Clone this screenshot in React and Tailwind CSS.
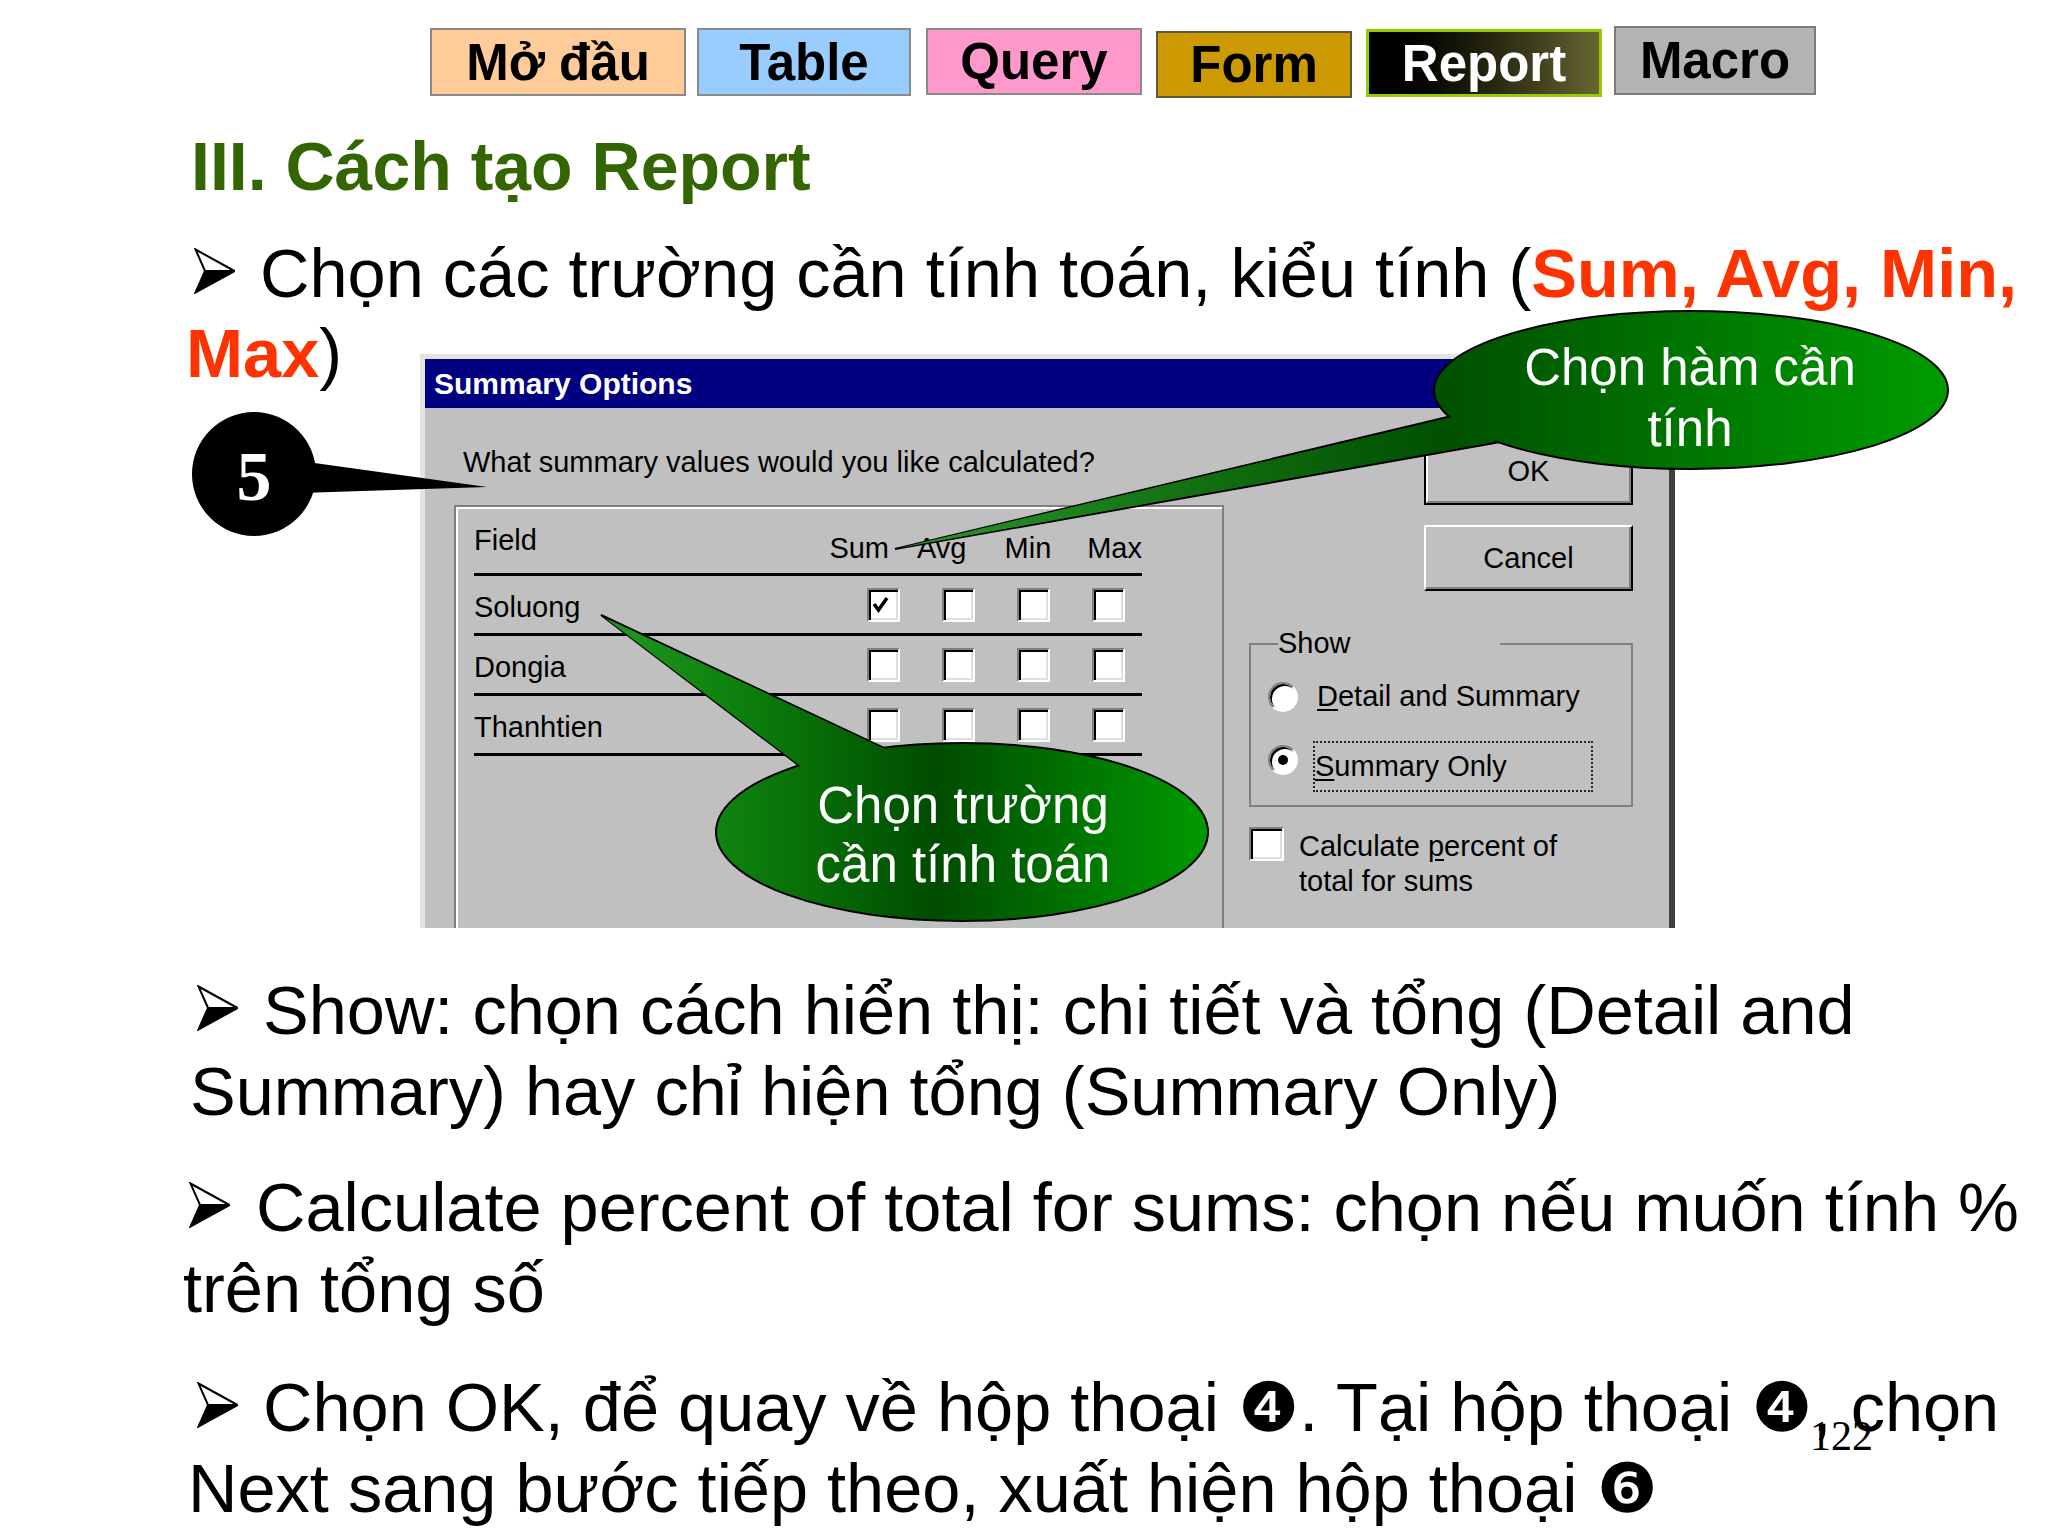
import React from 'react'

const Bullet = () => (
  <svg width="42" height="46" viewBox="0 0 42 46" className="inline-block align-[3px]">
    <path d="M1.5 1.5 L40.5 23 L11 23 Z" fill="#fff" stroke="#000" strokeWidth="2" strokeLinejoin="miter" />
    <path d="M11 23 L40.5 23 L1.5 44.5 Z" fill="#000" stroke="#000" strokeWidth="2" strokeLinejoin="miter" />
  </svg>
)

const tabs = [
  { label: 'Mở đầu', cls: 'ml-0 mt-[2px] w-[256px] h-[68px] bg-[#ffcc99] border-2 border-[#8a8a8a] text-black' },
  { label: 'Table', cls: 'ml-[11px] mt-[2px] w-[214px] h-[68px] bg-[#99ccff] border-2 border-[#8a8a8a] text-black' },
  { label: 'Query', cls: 'ml-[15px] mt-[2px] w-[216px] h-[67px] bg-[#ff99cc] border-2 border-[#8a8a8a] text-black' },
  { label: 'Form', cls: 'ml-[14px] mt-[5px] w-[196px] h-[67px] bg-[#cc9900] border-2 border-[#5a5a3a] text-black' },
  { label: 'Report', cls: 'ml-[14px] mt-[3px] w-[236px] h-[68px] bg-gradient-to-r from-black to-[#666633] border-[3px] border-[#99cc00] text-white' },
  { label: 'Macro', cls: 'ml-[12px] mt-0 w-[202px] h-[69px] bg-[#b3b3b3] border-2 border-[#7a7a7a] text-black' },
]

const Check = ({ checked, big }) => (
  <div
    className={`${big ? 'w-[35px]' : 'w-[33px]'} h-[34px] shrink-0 bg-white border-2 border-t-[#808080] border-l-[#808080] border-b-white border-r-white shadow-[inset_2px_2px_0_#000,inset_-2px_-2px_0_#dfdfdf] flex items-center justify-start pl-[3px]`}
  >
    {checked && (
      <svg width="18" height="20" viewBox="0 0 18 20">
        <path d="M2 9 L6.5 15 L15 3" fill="none" stroke="#000" strokeWidth="3.5" />
      </svg>
    )}
  </div>
)

const Radio = ({ on }) => (
  <div className="w-[30px] h-[30px] shrink-0 rounded-full bg-white border-2 border-t-[#808080] border-l-[#808080] border-b-white border-r-white shadow-[inset_2px_2px_0_#000] flex items-center justify-center">
    {on && <div className="w-[10px] h-[10px] rounded-full bg-black" />}
  </div>
)

const fields = [
  { name: 'Soluong', checked: true },
  { name: 'Dongia', checked: false },
  { name: 'Thanhtien', checked: false },
]

function Dialog() {
  return (
    <div className="mt-[40px] w-[1255px] h-[574px] overflow-hidden bg-[#c0c0c0] border-t-[5px] border-l-[5px] border-[#e4e4e4] border-r-[6px] border-r-[#404040] flex flex-col text-[29px] leading-[33px] text-black">
      <div className="h-[49px] shrink-0 bg-[#000080] flex items-center pl-[9px] text-white font-bold text-[30px]">
        Summary Options
      </div>
      <div className="flex flex-1 min-h-0">
        <div className="pl-[29px] w-[799px] flex flex-col">
          <div className="ml-[9px] mt-[38px]">What summary values would you like calculated?</div>
          <div className="mt-[26px] w-[770px] flex-1 border-2 border-b-0 border-[#808080] shadow-[inset_2px_2px_0_#fff]">
            <div className="ml-[18px] w-[668px]">
              <div className="h-[69px] pb-[8px] border-b-[3px] border-black flex items-end">
                <div className="w-[357px] mb-[8px]">Field</div>
                <div className="w-[88px]">Sum</div>
                <div className="w-[88px]">Avg</div>
                <div className="w-[83px]">Min</div>
                <div>Max</div>
              </div>
              {fields.map((f) => (
                <div key={f.name} className="h-[60px] border-b-[3px] border-black flex items-center">
                  <div className="w-[393px] mt-[5px]">{f.name}</div>
                  <div className="flex gap-[42px]">
                    <Check checked={f.checked} />
                    <Check />
                    <Check />
                    <Check />
                  </div>
                </div>
              ))}
            </div>
          </div>
        </div>

        <div className="ml-[25px] w-[384px] flex flex-col">
          <div className="mt-[29px] ml-[175px] w-[209px] h-[68px] border-2 border-black">
            <div className="h-full border-2 border-t-white border-l-white border-b-[#808080] border-r-[#808080] flex items-center justify-center">
              OK
            </div>
          </div>
          <div className="mt-[20px] ml-[175px] w-[209px] h-[66px] border-2 border-t-white border-l-white border-b-black border-r-black shadow-[inset_-2px_-2px_0_#808080] flex items-center justify-center">
            Cancel
          </div>

          <fieldset className="mt-[36px] w-[384px] p-0 m-0 border-2 border-[#808080]">
            <legend className="ml-[27px] w-[222px] p-0">Show</legend>
            <div className="pl-[17px] pb-[20px]">
              <div className="mt-[11px] h-[51px] flex items-center">
                <Radio />
                <div className="ml-[17px] pl-[2px]">
                  <span className="underline underline-offset-[3px]">D</span>etail and Summary
                </div>
              </div>
              <div className="mt-[12px] h-[51px] flex items-center">
                <Radio on />
                <div className="ml-[15px] w-[280px] h-[51px] mt-[14px] border-2 border-dotted border-[#222] flex items-center">
                  <span>
                    <span className="underline underline-offset-[3px]">S</span>ummary Only
                  </span>
                </div>
              </div>
            </div>
          </fieldset>

          <div className="mt-[20px] flex items-start">
            <Check big />
            <div className="ml-[15px] mt-[2px] leading-[35px]">
              Calculate <span className="underline underline-offset-[3px]">p</span>ercent of
              <br />
              total for sums
            </div>
          </div>
        </div>
      </div>
    </div>
  )
}

function Overlay() {
  return (
    <svg
      className="absolute left-0 top-0 pointer-events-none"
      width="2048"
      height="1536"
      viewBox="0 0 2048 1536"
    >
      <defs>
        <linearGradient id="g1" gradientUnits="userSpaceOnUse" x1="895" y1="0" x2="1948" y2="0">
          <stop offset="0" stopColor="#2a962a" />
          <stop offset="0.52" stopColor="#005000" />
          <stop offset="1" stopColor="#009c00" />
        </linearGradient>
        <linearGradient id="g2" gradientUnits="userSpaceOnUse" x1="601" y1="0" x2="1209" y2="0">
          <stop offset="0" stopColor="#1f9a1f" />
          <stop offset="0.25" stopColor="#0b7d0b" />
          <stop offset="0.55" stopColor="#004c00" />
          <stop offset="1" stopColor="#009a00" />
        </linearGradient>
      </defs>

      {/* number 5 marker */}
      <polygon points="300,461 487,487 300,493" fill="#000" />
      <circle cx="254" cy="474" r="62" fill="#000" />
      <text
        x="254"
        y="500"
        textAnchor="middle"
        fill="#fff"
        fontFamily="Liberation Serif, serif"
        fontWeight="bold"
        fontSize="70"
      >
        5
      </text>

      {/* callout: Chọn hàm cần tính */}
      <polygon points="895,549 1552,392 1552,433" fill="url(#g1)" stroke="#000" strokeWidth="2" />
      <ellipse cx="1691" cy="390" rx="257" ry="79" fill="url(#g1)" stroke="#000" strokeWidth="2" />
      <polygon points="899,548 1550,394 1550,431" fill="url(#g1)" />
      <text
        x="1690"
        y="385"
        textAnchor="middle"
        fill="#fff"
        fontFamily="Liberation Sans, Arial, sans-serif"
        fontSize="51"
      >
        Chọn hàm cần
      </text>
      <text
        x="1690"
        y="446"
        textAnchor="middle"
        fill="#fff"
        fontFamily="Liberation Sans, Arial, sans-serif"
        fontSize="51"
      >
        tính
      </text>

      {/* callout: Chọn trường cần tính toán */}
      <polygon points="601,615 826,786 901,756" fill="url(#g2)" stroke="#000" strokeWidth="2" />
      <ellipse cx="962" cy="832" rx="246" ry="89" fill="url(#g2)" stroke="#000" strokeWidth="2" />
      <polygon points="605,618 824,784 898,755" fill="url(#g2)" />
      <text
        x="963"
        y="823"
        textAnchor="middle"
        fill="#fff"
        fontFamily="Liberation Sans, Arial, sans-serif"
        fontSize="51"
      >
        Chọn trường
      </text>
      <text
        x="963"
        y="882"
        textAnchor="middle"
        fill="#fff"
        fontFamily="Liberation Sans, Arial, sans-serif"
        fontSize="51"
      >
        cần tính toán
      </text>
    </svg>
  )
}

export default function App() {
  return (
    <div className="relative w-[2048px] h-[1536px] overflow-hidden bg-white text-black font-['Liberation_Sans','DejaVu_Sans',sans-serif]">
      {/* nav tabs */}
      <div className="flex items-start pl-[430px] pt-[26px] h-[98px]">
        {tabs.map((t) => (
          <div
            key={t.label}
            className={`${t.cls} shrink-0 flex items-center justify-center font-bold text-[51px] leading-none`}
          >
            {t.label}
          </div>
        ))}
      </div>

      <h1 className="mt-[34px] pl-[191px] text-[68px] leading-[68px] font-bold text-[#336600]">
        III. Cách tạo Report
      </h1>

      <div className="mt-[34px] text-[68.5px] leading-[80px] whitespace-nowrap">
        <div className="pl-[194px]">
          <span className="inline-block w-[66px]">
            <Bullet />
          </span>
          Chọn các trường cần tính toán, kiểu tính (
          <span className="font-bold text-[#ff3300]">Sum, Avg, Min,</span>
        </div>
        <div className="flex items-start">
          <div className="w-[420px] shrink-0 pl-[186px]">
            <span className="font-bold text-[#ff3300]">Max</span>)
          </div>
          <Dialog />
        </div>
      </div>

      <div className="mt-[42px] pl-[190px] text-[68.5px] leading-[81px] whitespace-nowrap">
        <div>
          <span className="inline-block ml-[7px] w-[66px]">
            <Bullet />
          </span>
          Show: chọn cách hiển thị: chi tiết và tổng (Detail and
        </div>
        <div>Summary) hay chỉ hiện tổng (Summary Only)</div>
      </div>

      <div className="mt-[35px] pl-[183px] text-[68.5px] leading-[81px] whitespace-nowrap">
        <div>
          <span className="inline-block ml-[6px] w-[67px]">
            <Bullet />
          </span>
          Calculate percent of total for sums: chọn nếu muốn tính %
        </div>
        <div>trên tổng số</div>
      </div>

      <div className="mt-[38px] pl-[188px] text-[68.5px] leading-[81px] whitespace-nowrap">
        <div>
          <span className="inline-block ml-[9px] w-[66px]">
            <Bullet />
          </span>
          Chọn OK, để quay về hộp thoại ❹. Tại hộp thoại ❹, chọn
        </div>
        <div>Next sang bước tiếp theo, xuất hiện hộp thoại ❻</div>
      </div>

      <Overlay />

      <div className="absolute left-[1810px] top-[1412px] text-[42px] leading-[48px] font-['Liberation_Serif',serif]">
        122
      </div>
    </div>
  )
}
